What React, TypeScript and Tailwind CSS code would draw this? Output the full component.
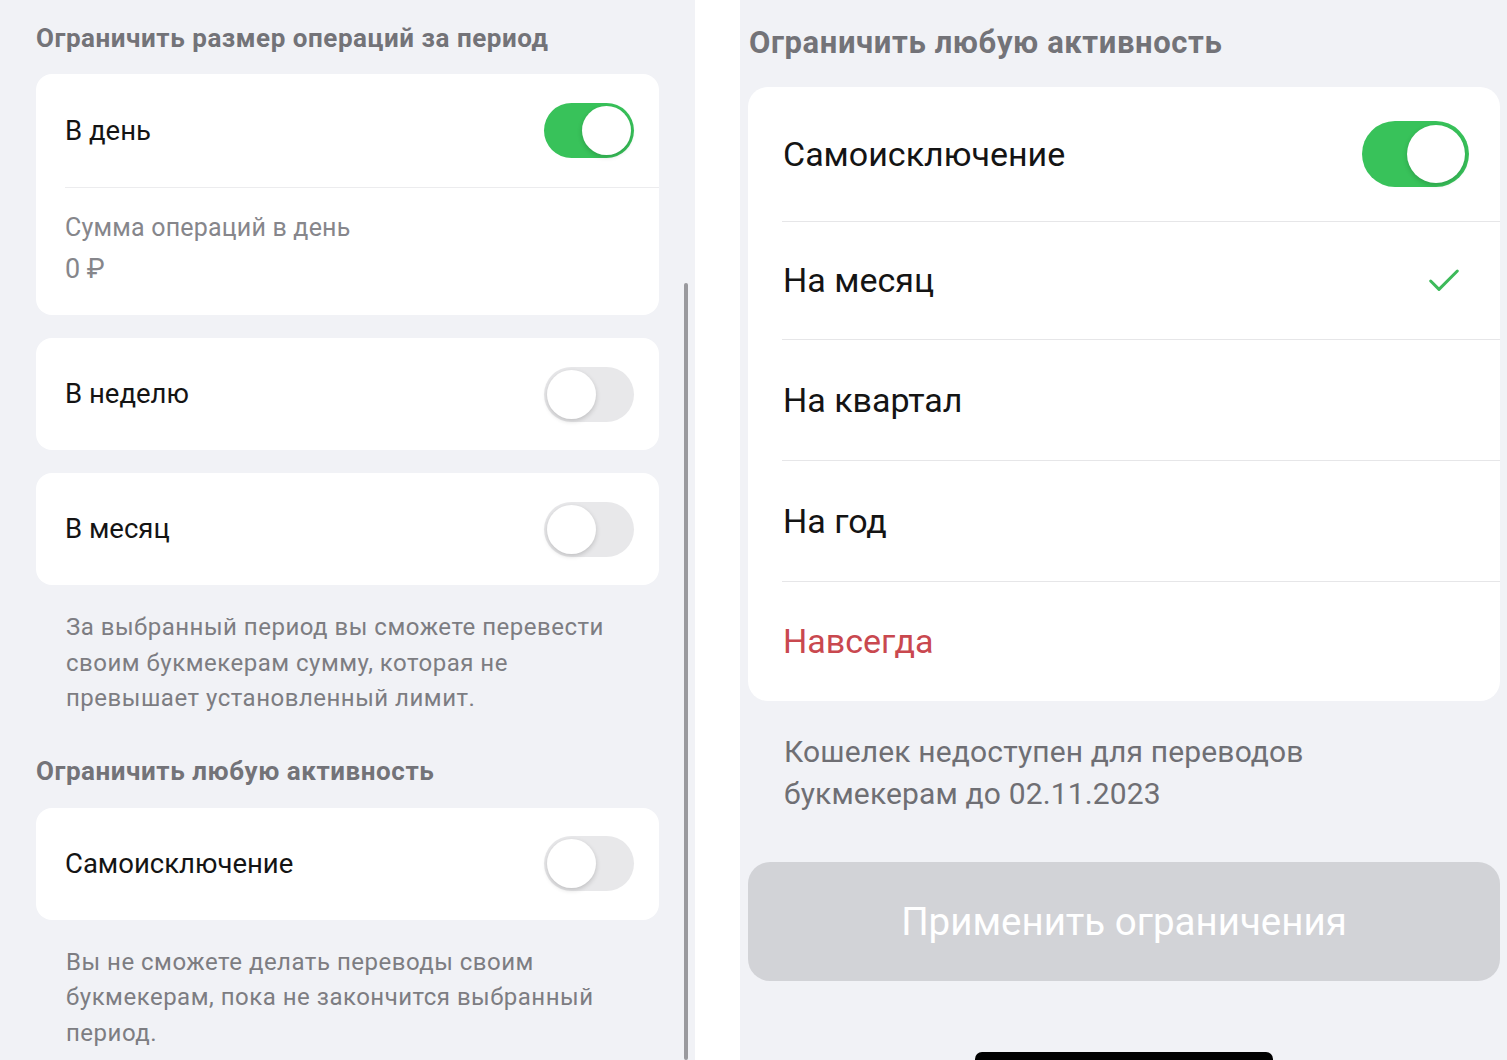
import { Check } from 'lucide-react'

const font = { fontFamily: 'Roboto, "Noto Sans", sans-serif' }

function Toggle({ on, big }: { on: boolean; big?: boolean }) {
  const size = big ? 'w-[107px] h-[66px] p-[4px]' : 'w-[90px] h-[55px] p-[3px]'
  const knob = big ? 'w-[58px] h-[58px]' : 'w-[49px] h-[49px]'
  return (
    <div
      className={`${size} rounded-full flex items-center ${
        on ? 'bg-[#38c25a] justify-end' : 'bg-[#e8e8ea] justify-start'
      }`}
    >
      <div className={`${knob} rounded-full bg-white shadow-[0_2px_5px_rgba(0,0,0,0.18)]`} />
    </div>
  )
}

function LeftRow({ label, on }: { label: string; on: boolean }) {
  return (
    <div className="h-[112px] flex items-center justify-between pl-[29px] pr-[25px]">
      <span className="text-[27.5px] text-[#141414]">{label}</span>
      <Toggle on={on} />
    </div>
  )
}

function LeftPanel() {
  return (
    <div className="relative w-[695px] shrink-0 bg-[#f1f2f6] pt-[24px] px-[36px]">
      <h2 className="text-[26px] leading-[28px] font-bold tracking-[0.55px] text-[#737378]">
        Ограничить размер операций за период
      </h2>

      <div className="mt-[22px] bg-white rounded-[16px]">
        <div className="h-[113px] flex items-center justify-between pl-[29px] pr-[25px]">
          <span className="text-[27.5px] text-[#141414]">В день</span>
          <Toggle on />
        </div>
        <div className="ml-[29px] h-px bg-[#ececee]" />
        <div className="pl-[29px] pt-[26px] pb-[32px]">
          <div className="text-[25px] leading-[28px] tracking-[0.2px] text-[#86868b]">
            Сумма операций в день
          </div>
          <div className="mt-[13px] text-[27px] leading-[28px] text-[#86868b]">0 ₽</div>
        </div>
      </div>

      <div className="mt-[23px] bg-white rounded-[16px]">
        <LeftRow label="В неделю" on={false} />
      </div>
      <div className="mt-[23px] bg-white rounded-[16px]">
        <LeftRow label="В месяц" on={false} />
      </div>

      <p className="mt-[25px] pl-[30px] text-[24px] leading-[35.5px] tracking-[0.5px] text-[#7d7d82]">
        За выбранный период вы сможете перевести
        <br />
        своим букмекерам сумму, которая не
        <br />
        превышает установленный лимит.
      </p>

      <h2 className="mt-[40px] text-[26px] leading-[28px] font-bold tracking-[0.55px] text-[#737378]">
        Ограничить любую активность
      </h2>

      <div className="mt-[23px] bg-white rounded-[16px]">
        <LeftRow label="Самоисключение" on={false} />
      </div>

      <p className="mt-[25px] pl-[30px] text-[24px] leading-[35.5px] tracking-[0.5px] text-[#7d7d82]">
        Вы не сможете делать переводы своим
        <br />
        букмекерам, пока не закончится выбранный
        <br />
        период.
      </p>

      {/* scroll indicator */}
      <div className="absolute left-[684px] top-[283px] bottom-0 w-[4px] rounded-full bg-[#9a9a9e]" />
    </div>
  )
}

const periods = [
  { label: 'На месяц', checked: true, h: 'h-[117px]' },
  { label: 'На квартал', checked: false, h: 'h-[120px]' },
  { label: 'На год', checked: false, h: 'h-[120px]' },
]

function RightPanel() {
  return (
    <div className="flex-1 bg-[#f1f2f6] pt-[26px] pl-[8px] pr-[7px]">
      <h2 className="pl-[1px] text-[31px] leading-[34px] font-bold tracking-[0.6px] text-[#737378]">
        Ограничить любую активность
      </h2>

      <div className="mt-[27px] bg-white rounded-[20px] overflow-hidden">
        <div className="h-[134px] flex items-center justify-between pl-[35px] pr-[31px]">
          <span className="text-[34px] text-[#141414]">Самоисключение</span>
          <Toggle on big />
        </div>
        {periods.map((p) => (
          <div key={p.label} className="ml-[34px] border-t border-[#e6e6e8]">
            <div className={`${p.h} flex items-center justify-between pl-px pr-[36px]`}>
              <span className="text-[34px] text-[#141414]">{p.label}</span>
              {p.checked && <Check className="w-[40px] h-[40px] text-[#3dba5a]" strokeWidth={1.8} />}
            </div>
          </div>
        ))}
        <div className="ml-[34px] border-t border-[#e6e6e8]">
          <div className="h-[119px] flex items-center pl-px">
            <span className="text-[34px] text-[#c9484f]">Навсегда</span>
          </div>
        </div>
      </div>

      <p className="mt-[30px] pl-[36px] text-[30px] leading-[42px] tracking-[0.15px] text-[#6f6f74]">
        Кошелек недоступен для переводов
        <br />
        букмекерам до 02.11.2023
      </p>

      <button className="mt-[47px] h-[119px] w-full rounded-[22px] bg-[#d2d3d7] text-white text-[38.5px]">
        Применить ограничения
      </button>

      <div className="mt-[71px] mx-auto w-[298px] h-[14px] rounded-full bg-black" />
    </div>
  )
}

export default function App() {
  return (
    <div className="h-[1060px] w-[1507px] overflow-hidden flex bg-white" style={font}>
      <LeftPanel />
      <div className="w-[45px] shrink-0 bg-white" />
      <RightPanel />
    </div>
  )
}
